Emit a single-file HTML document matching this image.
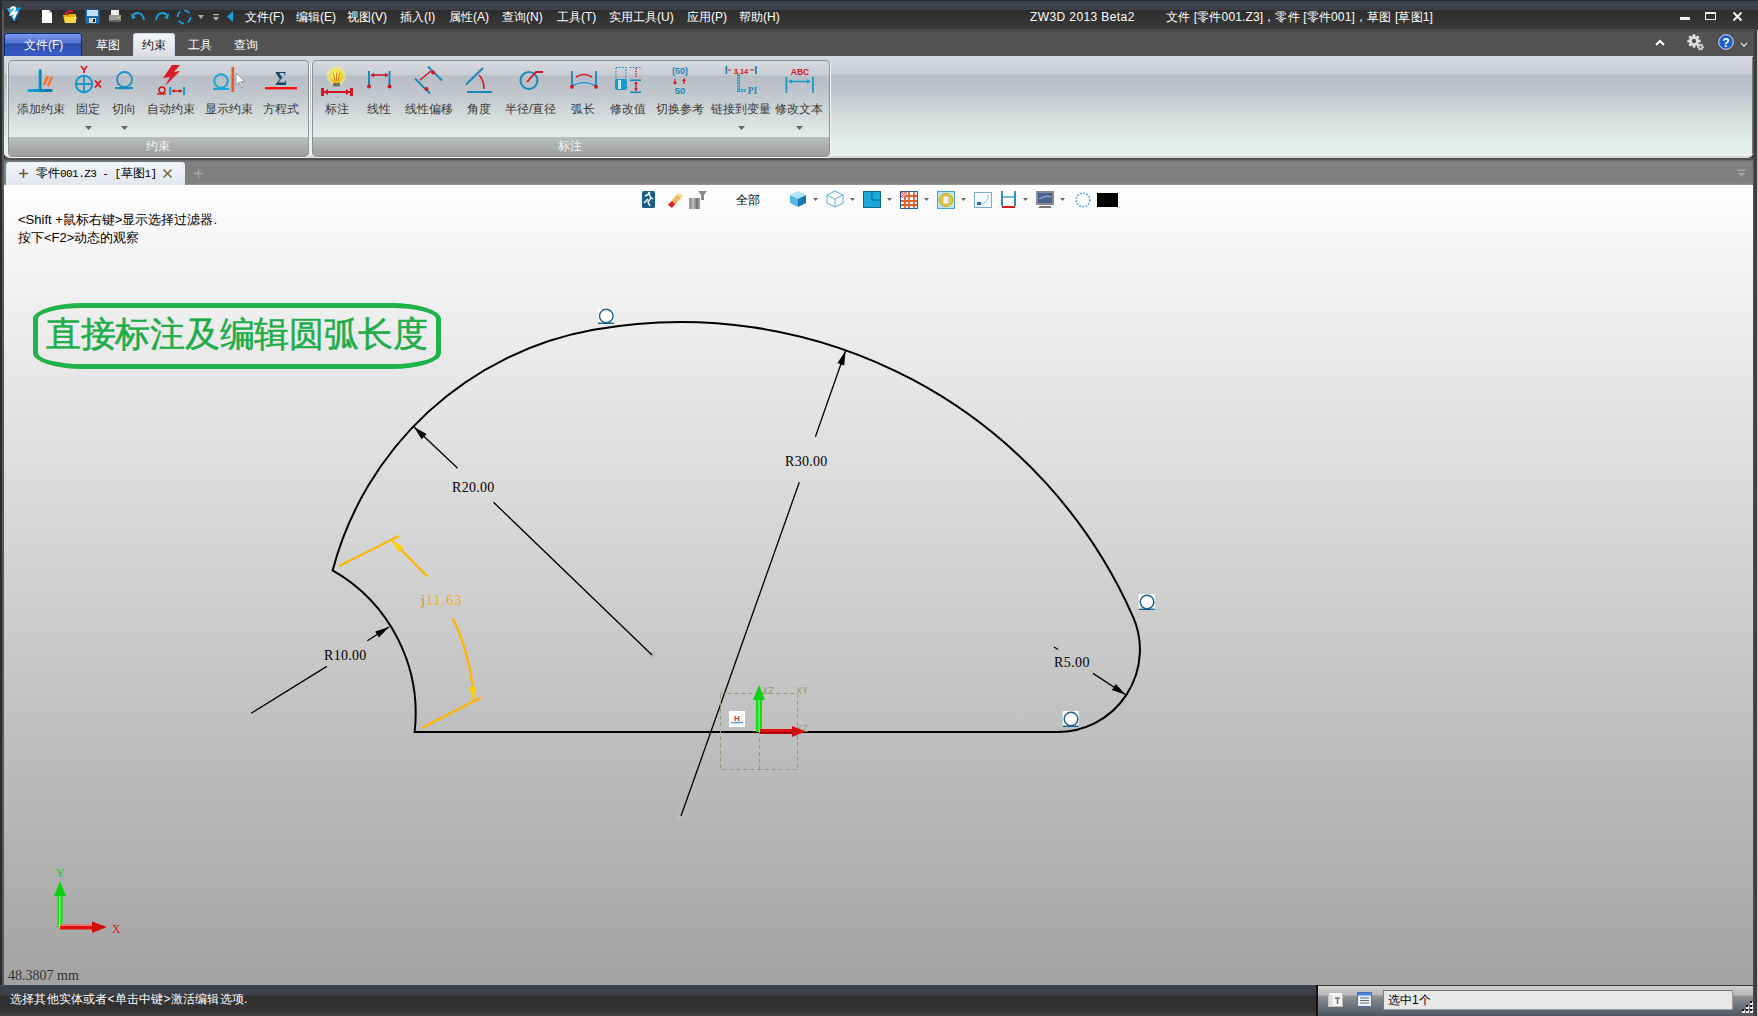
<!DOCTYPE html>
<html><head><meta charset="utf-8">
<style>
*{margin:0;padding:0;box-sizing:border-box}
html,body{width:1758px;height:1016px;overflow:hidden;background:#2e2e2e;font-family:"Liberation Sans",sans-serif;font-size:12px}
.a{position:absolute}
.t{position:absolute;white-space:nowrap;line-height:1}
.w{color:#fff}
.mono{font-family:"Liberation Mono",monospace}
svg{position:absolute;overflow:visible}
</style></head><body>
<div class="a" style="left:0;top:0;width:1758px;height:10px;background:#3d4049;border-top:1px solid #2c2c2c"></div>
<div class="a" style="left:4px;top:10px;width:1754px;height:19px;background:linear-gradient(#2d2d2d,#393939)"></div>
<div class="a" style="left:0;top:29px;width:1758px;height:3px;background:#474747"></div>
<div class="a" style="left:0;top:32px;width:1758px;height:25px;background:#525252"></div>
<div class="a" style="left:0;top:0;width:2px;height:1016px;background:#2a2a2a"></div>
<div class="a" style="left:2px;top:10px;width:2px;height:975px;background:#5a5a5a"></div>

<!-- logo -->
<svg style="left:6px;top:5px" width="17" height="18" viewBox="0 0 17 18">
<path d="M1 3 L15.5 2.5 L8.5 17 Z" fill="#1a9ad8"/><path d="M15.5 2.5 L8.5 17 L9 8 Z" fill="#0b5f98"/><path d="M1 3 L9 8 L8.5 17Z" fill="#38b8f0"/>
<path d="M5 3.5 C7.5 1 10 2.5 8.5 5 L5.5 9 L10.5 7.5 L8 12.5" stroke="#fff" stroke-width="2.2" fill="none" stroke-linecap="round"/>
<ellipse cx="8.5" cy="17" rx="4" ry="1" fill="#111" opacity="0.6"/>
</svg>
<!-- quick access icons -->
<svg style="left:41px;top:9px" width="12" height="15"><path d="M1 1 H8 L11 4 V14 H1 Z" fill="#fff"/><path d="M8 1 V4 H11" fill="#ccd" /></svg>
<svg style="left:62px;top:9px" width="16" height="15"><path d="M1 6 H6 L7 5 H14 V14 H3 Z" fill="#f5b400"/><path d="M2 8 H15 L13 14 H3 Z" fill="#ffd84a"/><path d="M4 6 C5 2 9 1 11 3" stroke="#e02020" stroke-width="2" fill="none"/><path d="M2 4 L6 7 L6 3Z" fill="#e02020"/></svg>
<svg style="left:85px;top:9px" width="15" height="15"><rect x="0.5" y="0.5" width="14" height="14" rx="1" fill="#1b6ea8"/><rect x="2" y="1" width="11" height="6" fill="#bfe0f5"/><rect x="4" y="9" width="7" height="5" fill="#ccc"/><rect x="8" y="10" width="2" height="3" fill="#123"/></svg>
<svg style="left:108px;top:9px" width="14" height="14"><rect x="3" y="1" width="8" height="5" fill="#eee"/><path d="M1 6 H13 V12 H1 Z" fill="#9a9a9a"/><rect x="2" y="11" width="10" height="2" fill="#666"/><rect x="10" y="8" width="2" height="1" fill="#ee0"/></svg>
<svg style="left:131px;top:12px" width="15" height="10"><path d="M2 3 C6 -1 12 1 13 8" stroke="#1aa0e0" stroke-width="2" fill="none"/><path d="M0 1 L5 6 L1 7Z" fill="#1aa0e0"/></svg>
<svg style="left:154px;top:12px" width="15" height="10"><path d="M13 3 C9 -1 3 1 2 8" stroke="#1aa0e0" stroke-width="2" fill="none"/><path d="M15 1 L10 6 L14 7Z" fill="#1aa0e0"/></svg>
<svg style="left:176px;top:9px" width="16" height="16"><circle cx="8" cy="8" r="6.5" stroke="#1aa0e0" stroke-width="1.6" fill="none" stroke-dasharray="6 4"/></svg>
<svg style="left:197px;top:14px" width="8" height="6"><path d="M1 1 H7 L4 5Z" fill="#aaa"/></svg>
<svg style="left:212px;top:13px" width="8" height="10"><rect x="1" y="1" width="6" height="1.2" fill="#aaa"/><path d="M1 4 H7 L4 8Z" fill="#aaa"/></svg>
<svg style="left:226px;top:10px" width="8" height="13"><path d="M7 1 V12 L1 6.5Z" fill="#1aa0e0"/></svg>
<div class="t w" style="left:245px;top:11px">文件(F)</div>
<div class="t w" style="left:296px;top:11px">编辑(E)</div>
<div class="t w" style="left:347px;top:11px">视图(V)</div>
<div class="t w" style="left:400px;top:11px">插入(I)</div>
<div class="t w" style="left:449px;top:11px">属性(A)</div>
<div class="t w" style="left:502px;top:11px">查询(N)</div>
<div class="t w" style="left:557px;top:11px">工具(T)</div>
<div class="t w" style="left:609px;top:11px">实用工具(U)</div>
<div class="t w" style="left:687px;top:11px">应用(P)</div>
<div class="t w" style="left:739px;top:11px">帮助(H)</div>
<div class="t w" style="left:1030px;top:11px;letter-spacing:0.4px">ZW3D 2013 Beta2</div>
<div class="t w" style="left:1166px;top:11px;letter-spacing:0.15px">文件 [零件001.Z3]，零件 [零件001]，草图 [草图1]</div>
<!-- window buttons -->
<div class="a" style="left:1680px;top:17px;width:10px;height:2.5px;background:#f0f0f0"></div>
<div class="a" style="left:1705px;top:12px;width:11px;height:8px;border:1.5px solid #f0f0f0;border-top-width:2.5px"></div>
<svg style="left:1732px;top:11px" width="11" height="11"><path d="M1.5 1.5 L9.5 9.5 M9.5 1.5 L1.5 9.5" stroke="#f0f0f0" stroke-width="2"/></svg>
<!-- ribbon tabs -->
<div class="a" style="left:4px;top:33px;width:78px;height:24px;border-radius:3px 3px 0 0;background:linear-gradient(#7b9bf0 0,#5070d0 9px,#2a4aa8 10px,#3a5cc8 20px,#2a48a0 24px);border:1px solid #0a2a80"></div>
<div class="t w" style="left:24px;top:39px">文件(F)</div>
<div class="t w" style="left:96px;top:39px">草图</div>
<div class="a" style="left:133px;top:33px;width:42px;height:25px;border-radius:3px 3px 0 0;background:linear-gradient(#f4f6f8,#d8dce2);border:1px solid #c9d8e0;border-bottom:none"></div>
<div class="t" style="left:142px;top:39px;color:#111">约束</div>
<div class="t w" style="left:188px;top:39px">工具</div>
<div class="t w" style="left:234px;top:39px">查询</div>
<svg style="left:1654px;top:39px" width="12" height="8"><path d="M2 6 L6 2 L10 6" stroke="#fff" stroke-width="2" fill="none"/></svg>
<svg style="left:1687px;top:34px" width="18" height="18"><path d="M11.32 5.41 L13.70 5.81 L13.70 8.19 L11.32 8.59 L11.17 8.93 L12.58 10.89 L10.89 12.58 L8.93 11.17 L8.59 11.32 L8.19 13.70 L5.81 13.70 L5.41 11.32 L5.07 11.17 L3.11 12.58 L1.42 10.89 L2.83 8.93 L2.68 8.59 L0.30 8.19 L0.30 5.81 L2.68 5.41 L2.83 5.07 L1.42 3.11 L3.11 1.42 L5.07 2.83 L5.41 2.68 L5.81 0.30 L8.19 0.30 L8.59 2.68 L8.93 2.83 L10.89 1.42 L12.58 3.11 L11.17 5.07Z" fill="#e0e0e0"/><circle cx="7" cy="7" r="2.2" fill="#525252"/><path d="M15.64 11.91 L17.00 12.16 L17.00 13.84 L15.64 14.09 L15.51 14.31 L15.98 15.61 L14.53 16.45 L13.63 15.40 L13.37 15.40 L12.47 16.45 L11.02 15.61 L11.49 14.31 L11.36 14.09 L10.00 13.84 L10.00 12.16 L11.36 11.91 L11.49 11.69 L11.02 10.39 L12.47 9.55 L13.37 10.60 L13.63 10.60 L14.53 9.55 L15.98 10.39 L15.51 11.69Z" fill="#d0d0d0"/><circle cx="13.5" cy="13" r="1" fill="#525252"/></svg>
<svg style="left:1718px;top:34px" width="16" height="16"><circle cx="8" cy="8" r="7.3" fill="#1e5fd0" stroke="#dde" stroke-width="1"/><text x="8" y="12.5" font-size="12" font-weight="bold" fill="#fff" text-anchor="middle" font-family="Liberation Sans">?</text></svg>
<svg style="left:1740px;top:42px" width="8" height="6"><path d="M1 1 L4 4 L7 1" stroke="#ddd" stroke-width="1.3" fill="none"/></svg>
<div class="a" style="left:4px;top:56px;width:1749px;height:102px;background:linear-gradient(#d6d9df 0,#c9cdd4 18px,#b7bcc6 19px,#c4c9cf 40px,#d8dddd 62px,#e5ecec 85px,#e8efef 100px);border-radius:0 0 5px 5px;border-bottom:2px solid #d4d6d6"></div>
<div class="a" style="left:1752px;top:57px;width:1px;height:97px;background:#7a7a7a"></div>
<!-- group panels -->
<div class="a" style="left:8px;top:60px;width:301px;height:97px;border:1px solid #8f9196;border-radius:4px;background:linear-gradient(#d6d9df 0,#c9cdd4 14px,#b7bcc6 15px,#c4c9cf 36px,#d8dddd 58px,#e5ecec 76px);box-shadow:1px 1px 0 #f2f6f6,-1px 0 0 #eef2f2"></div>
<div class="a" style="left:312px;top:60px;width:518px;height:97px;border:1px solid #8f9196;border-radius:4px;background:linear-gradient(#d6d9df 0,#c9cdd4 14px,#b7bcc6 15px,#c4c9cf 36px,#d8dddd 58px,#e5ecec 76px);box-shadow:1px 1px 0 #f2f6f6,-1px 0 0 #eef2f2"></div>
<div class="a" style="left:9px;top:137px;width:299px;height:19px;border-radius:0 0 3px 3px;background:linear-gradient(#bcbdbd,#9d9e9f)"></div>
<div class="a" style="left:313px;top:137px;width:516px;height:19px;border-radius:0 0 3px 3px;background:linear-gradient(#bcbdbd,#9d9e9f)"></div>
<div class="t" style="left:146px;top:140px;color:#f4f4f4">约束</div>
<div class="t" style="left:558px;top:140px;color:#f4f4f4">标注</div>
<!-- labels -->
<div class="t" style="left:17px;top:103px;color:#3a3a3a">添加约束</div>
<div class="t" style="left:76px;top:103px;color:#3a3a3a">固定</div>
<div class="t" style="left:112px;top:103px;color:#3a3a3a">切向</div>
<div class="t" style="left:147px;top:103px;color:#3a3a3a">自动约束</div>
<div class="t" style="left:205px;top:103px;color:#3a3a3a">显示约束</div>
<div class="t" style="left:263px;top:103px;color:#3a3a3a">方程式</div>
<div class="t" style="left:325px;top:103px;color:#3a3a3a">标注</div>
<div class="t" style="left:367px;top:103px;color:#3a3a3a">线性</div>
<div class="t" style="left:405px;top:103px;color:#3a3a3a">线性偏移</div>
<div class="t" style="left:467px;top:103px;color:#3a3a3a">角度</div>
<div class="t" style="left:505px;top:103px;color:#3a3a3a">半径/直径</div>
<div class="t" style="left:571px;top:103px;color:#3a3a3a">弧长</div>
<div class="t" style="left:610px;top:103px;color:#3a3a3a">修改值</div>
<div class="t" style="left:656px;top:103px;color:#3a3a3a">切换参考</div>
<div class="t" style="left:711px;top:103px;color:#3a3a3a">链接到变量</div>
<div class="t" style="left:775px;top:103px;color:#3a3a3a">修改文本</div>
<svg style="left:85px;top:126px" width="7" height="4"><path d="M0 0H7L3.5 4Z" fill="#666"/></svg>
<svg style="left:121px;top:126px" width="7" height="4"><path d="M0 0H7L3.5 4Z" fill="#666"/></svg>
<svg style="left:738px;top:126px" width="7" height="4"><path d="M0 0H7L3.5 4Z" fill="#666"/></svg>
<svg style="left:796px;top:126px" width="7" height="4"><path d="M0 0H7L3.5 4Z" fill="#666"/></svg>
<!-- icons group 1 -->
<svg style="left:0;top:0" width="900" height="100">
<defs>
<linearGradient id="bl" x1="0" y1="0" x2="1" y2="0"><stop offset="0" stop-color="#16a8d8"/><stop offset="1" stop-color="#0a6f9a"/></linearGradient>
</defs>
<!-- add constraint -->
<rect x="38.5" y="69.5" width="3" height="20" fill="url(#bl)"/>
<rect x="27.5" y="89" width="25" height="3" rx="1" fill="url(#bl)"/>
<path d="M44 85 L48 76 M48 86 L52 77" stroke="#ff6a10" stroke-width="2.2"/>
<!-- fixed -->
<circle cx="84" cy="84" r="8.2" fill="none" stroke="#1a98c8" stroke-width="2"/>
<path d="M84 76 V92 M76 84 H92" stroke="#1a98c8" stroke-width="1.8"/>
<path d="M81 66 L84 70 L87 66 M84 70 V73" stroke="#e01020" stroke-width="1.6" fill="none"/>
<path d="M95 80.5 L101 87.5 M101 80.5 L95 87.5" stroke="#e01020" stroke-width="1.8"/>
<!-- tangent -->
<circle cx="124.5" cy="79.5" r="7.5" fill="none" stroke="#1a90bc" stroke-width="1.8"/>
<rect x="115" y="87" width="18" height="2.2" fill="#1a90bc"/>
<!-- auto constraint -->
<path d="M172 65 L180 65 L174 72 L180 71 L165 86 L170 77 L163 78 Z" fill="#d81c28"/>
<circle cx="162" cy="90" r="3" fill="none" stroke="#c81818" stroke-width="1.4"/>
<rect x="157" y="93.3" width="9" height="1.4" fill="#c81818"/>
<rect x="169" y="87" width="2.2" height="8" fill="#1aa0d0"/><rect x="183" y="87" width="2.2" height="8" fill="#1aa0d0"/>
<path d="M172 91 H182" stroke="#c81818" stroke-width="1.4"/><path d="M172 91 L174.5 89 V93Z M182 91 L179.5 89 V93Z" fill="#c81818"/>
<!-- show constraint -->
<circle cx="221" cy="81" r="6.8" fill="none" stroke="#1aa8d0" stroke-width="2"/>
<rect x="213" y="88" width="16" height="2" fill="#1aa8d0"/>
<rect x="231.5" y="67" width="2.6" height="25" fill="#ea5a20"/>
<path d="M236 73 L236 85 L239 82 L241.5 87.5 L243 86.8 L240.6 81.5 L244.5 81.3 Z" fill="#fff" stroke="#8090a0" stroke-width="0.8"/>
<!-- equation -->
<text x="281" y="84.5" font-size="18" font-weight="bold" fill="#0c4a68" text-anchor="middle" font-family="Liberation Serif">Σ</text>
<rect x="265" y="87" width="32" height="2.4" fill="#ff1010"/>
<!-- group 2 -->
<!-- annotate bulb -->
<defs><radialGradient id="bulbg" cx="0.45" cy="0.4" r="0.6"><stop offset="0" stop-color="#fffbc0"/><stop offset="0.6" stop-color="#f8e030"/><stop offset="1" stop-color="#e8b800"/></radialGradient></defs>
<circle cx="336.5" cy="76" r="9.8" fill="#f4f070" opacity="0.55"/>
<path d="M330 76 A6.5 6.5 0 1 1 343 76 C343 79 340.5 80.5 340 83 H333 C332.5 80.5 330 79 330 76Z" fill="url(#bulbg)"/>
<path d="M333.5 73 L335 81 M339.5 73 L338 81 M336.5 72.5 V81" stroke="#d07010" stroke-width="0.9"/>
<rect x="333" y="83" width="7" height="3.5" rx="1" fill="#707070"/>
<rect x="321" y="88" width="3" height="8" fill="#d01820"/><rect x="350" y="88" width="3" height="8" fill="#d01820"/>
<path d="M324 92 H350" stroke="#d01820" stroke-width="2"/><path d="M324 92 L328 89 V95Z M350 92 L346 89 V95Z" fill="#d01820"/>
<!-- linear -->
<rect x="368" y="71" width="2" height="16" fill="#1a88b8"/><rect x="388.5" y="71" width="2" height="16" fill="#1a88b8"/>
<circle cx="369" cy="86.5" r="2" fill="#d01820"/><circle cx="389.5" cy="86.5" r="2" fill="#d01820"/>
<path d="M371 75 H388" stroke="#d01820" stroke-width="1.6"/><path d="M371 75 L374 72.5 V77.5Z M388 75 L385 72.5 V77.5Z" fill="#d01820"/>
<!-- linear offset -->
<path d="M415 78.5 L430 93.5 M428 66.5 L442 80.5" stroke="#1a88b8" stroke-width="2"/>
<circle cx="426.5" cy="89" r="2" fill="#d01820"/><circle cx="433" cy="72.5" r="2" fill="#d01820"/>
<path d="M420 80 L431 71" stroke="#d01820" stroke-width="1.5"/>
<!-- angle -->
<path d="M466 84.5 L483 68" stroke="#1a88b8" stroke-width="2"/>
<rect x="467" y="91" width="25" height="2" fill="#1a88b8"/>
<path d="M479 75 Q484 80 484 89" stroke="#d01820" stroke-width="1.6" fill="none"/>
<!-- radius -->
<circle cx="529" cy="80.5" r="8.5" fill="none" stroke="#1a88b8" stroke-width="2"/>
<path d="M527 82 L536 72 H543" stroke="#d01820" stroke-width="1.8" fill="none"/>
<!-- arc length -->
<rect x="571" y="71" width="1.8" height="16" fill="#1a88b8"/><rect x="595.2" y="71" width="1.8" height="16" fill="#1a88b8"/>
<path d="M572 86 Q584 79 596 86" stroke="#1aa0d0" stroke-width="1.6" fill="none"/>
<circle cx="572" cy="86.7" r="2" fill="#d01820"/><circle cx="596" cy="86.7" r="2" fill="#d01820"/>
<path d="M576 77 Q584 72 592 77" stroke="#d01820" stroke-width="1.5" fill="none"/>
<!-- modify value -->
<rect x="616" y="67.5" width="10" height="12" fill="none" stroke="#1a88b8" stroke-width="1.2" stroke-dasharray="1.5 1.5"/>
<rect x="615" y="79" width="12" height="11" rx="2" fill="#1a98c8"/><rect x="618" y="80" width="3" height="9" fill="#bfe8f8"/>
<path d="M630 67.5 H641" stroke="#1a88b8" stroke-width="1.2" stroke-dasharray="1.5 1.5"/>
<path d="M636 68 V77" stroke="#d01820" stroke-width="1.2" stroke-dasharray="1.5 1"/>
<rect x="630" y="79.5" width="11" height="1.6" fill="#1a88b8"/><rect x="630" y="91.5" width="11" height="1.6" fill="#1a88b8"/>
<path d="M636 82 V91" stroke="#d01820" stroke-width="1.3"/><path d="M636 81.5 L634 84 H638Z M636 91 L634 88.5 H638Z" fill="#d01820"/>
<!-- toggle reference -->
<text x="680" y="73.5" font-size="9" font-weight="bold" fill="#1a88b8" text-anchor="middle" font-family="Liberation Sans">(50)</text>
<path d="M675 79 V84 M684 79 V84" stroke="#d01820" stroke-width="1.3"/><path d="M673 82 H677 L675 85Z M682 81 H686 L684 78Z" fill="#d01820"/>
<text x="680" y="93.5" font-size="9.5" font-weight="bold" fill="#1a88b8" text-anchor="middle" font-family="Liberation Sans">50</text>
<!-- link to variable -->
<rect x="725.5" y="66" width="1.8" height="8" fill="#1a88b8"/><rect x="755" y="66" width="1.8" height="8" fill="#1a88b8"/>
<text x="741" y="73.5" font-size="7.5" font-weight="bold" fill="#d01820" text-anchor="middle" font-family="Liberation Sans">3,14</text>
<path d="M728 70 H731 M750 70 H754" stroke="#d01820" stroke-width="1"/>
<path d="M738.5 74 V90.5 H746" stroke="#1a98c8" stroke-width="3" fill="none" stroke-dasharray="2 0.7"/><path d="M738.5 74 V90.5 H746" stroke="#9ad8f0" stroke-width="1" fill="none" stroke-dasharray="1 1.7"/>
<text x="752.5" y="94" font-size="9.5" font-weight="bold" fill="#1a88b8" text-anchor="middle" font-family="Liberation Serif">PI</text>
<!-- modify text -->
<text x="800" y="74.5" font-size="8.5" font-weight="bold" fill="#d01820" text-anchor="middle" font-family="Liberation Sans">ABC</text>
<rect x="785.5" y="77" width="1.8" height="16" fill="#1a98c8"/><rect x="812" y="77" width="1.8" height="16" fill="#1a98c8"/>
<path d="M789 81.5 H810" stroke="#1a98c8" stroke-width="1.5"/><path d="M788 81.5 L792 79.5 V83.5Z M811 81.5 L807 79.5 V83.5Z" fill="#1a98c8"/>
</svg>
<!-- document tab bar -->
<div class="a" style="left:4px;top:158px;width:1749px;height:27px;background:linear-gradient(#5a5a5a 0,#4f4f4f 1.5px,#7a7a7a 3px,#808080 5px,#7f7f7f 25px,#9a9a9a 27px)"></div>
<div class="a" style="left:6px;top:162px;width:179px;height:23px;border-radius:3px 3px 0 0;background:linear-gradient(#f2f4f8,#e2e6ee);border-left:1px solid #c8f0f8;border-top:1px solid #dff4f8"></div>
<svg style="left:18px;top:168px" width="11" height="11"><path d="M5.5 1 V10 M1 5.5 H10" stroke="#6a5a30" stroke-width="1.6"/></svg>
<div class="t" style="left:36px;top:167px;color:#000;font-size:12px">零件<span class="mono" style="font-size:11px;letter-spacing:-0.55px">001.Z3 - [</span>草图<span class="mono" style="font-size:11px;letter-spacing:-0.55px">1]</span></div>
<svg style="left:162px;top:168px" width="11" height="11"><path d="M1.5 1.5 L9.5 9.5 M9.5 1.5 L1.5 9.5" stroke="#7a6a40" stroke-width="1.6"/></svg>
<svg style="left:193px;top:168px" width="11" height="11"><path d="M5.5 1 V10 M1 5.5 H10" stroke="#a8a8a8" stroke-width="1.4"/></svg>
<svg style="left:1737px;top:169px" width="9" height="9"><rect x="0.5" y="0.5" width="8" height="1.5" fill="#aaa3a3"/><path d="M1 4 H8 L4.5 7.5Z" fill="#aaa3a3"/></svg>
<div class="a" style="left:4px;top:184.5px;width:1749px;height:800.5px;background:linear-gradient(#fefefe 0,#f6f6f6 60px,#a3a3a3 800px)"></div>
<!-- view toolbar -->
<svg style="left:0;top:0" width="1200" height="230">
<defs>
<linearGradient id="cubeT" x1="0" y1="0" x2="0" y2="1"><stop offset="0" stop-color="#9fdcf4"/><stop offset="1" stop-color="#4bb4e0"/></linearGradient>
</defs>
<rect x="642" y="191" width="13" height="17" rx="1.5" fill="#1b5f86"/>
<path d="M645 196 L649 194 L651 198 L648 202 L650 206 M648 199 L644 203 M650 197 L653 199" stroke="#fff" stroke-width="1.4" fill="none"/><circle cx="649" cy="193" r="1.2" fill="#fff"/>
<path d="M668 205 L678 193 L683 196 L673 207 Z" fill="#e8c060"/><path d="M668 205 L672 201 L675 204 L672 208 Z" fill="#e02030"/><path d="M677 194 L682 197" stroke="#fff" stroke-width="1"/>
<rect x="689" y="198" width="11" height="11" fill="#999"/><rect x="692" y="198" width="2" height="11" fill="#bbb"/><rect x="696" y="198" width="2" height="11" fill="#777"/>
<path d="M698 191 H707 L704 195 V200 H701 V195 Z" fill="#8a8a8a"/>
<!-- cube -->
<path d="M790 195 L798 191 L806 195 L798 199 Z" fill="#aee4f8"/><path d="M790 195 L798 199 V207 L790 203 Z" fill="#52b8e4"/><path d="M806 195 L798 199 V207 L806 203 Z" fill="#1a78b0"/>
<path d="M813 198 H818 L815.5 201Z" fill="#666"/>
<path d="M827 195 L835 191 L843 195 L835 199 Z M827 195 V203 L835 207 V199 M843 195 V203 L835 207" fill="#fff" stroke="#5aaed8" stroke-width="1"/>
<path d="M850 198 H855 L852.5 201Z" fill="#666"/>
<rect x="863.5" y="191.5" width="17" height="16" fill="#1aa8d8" stroke="#0a6890" stroke-width="1"/><path d="M872 192 V200 H880" stroke="#0a6890" stroke-width="1" fill="none"/>
<path d="M887 198 H892 L889.5 201Z" fill="#666"/>
<rect x="900.5" y="191.5" width="17" height="17" fill="#fff" stroke="#2a60a0" stroke-width="1"/>
<path d="M901 196 H917 M901 201 H917 M901 205 H917 M905 192 V208 M909 192 V208 M914 192 V208" stroke="#e06030" stroke-width="1.8"/>
<rect x="901" y="192" width="5" height="5" fill="#fff" stroke="#c03040" stroke-width="0.8"/><path d="M901.5 192.5 L905.5 196.5 M905.5 192.5 L901.5 196.5" stroke="#d02030" stroke-width="0.8"/>
<path d="M924 198 H929 L926.5 201Z" fill="#666"/>
<rect x="937.5" y="191.5" width="17" height="17" fill="#bde4f4" stroke="#4aa0d0" stroke-width="1"/><circle cx="946" cy="200" r="6.5" fill="#f4d020" stroke="#c8a010" stroke-width="1"/><rect x="943" y="196" width="6" height="8" fill="#eee" stroke="#999" stroke-width="0.6"/>
<path d="M961 198 H966 L963.5 201Z" fill="#666"/>
<rect x="974.5" y="192.5" width="17" height="15" fill="#f4f8fc" stroke="#7aaccc" stroke-width="1"/><path d="M978 203 A7 7 0 0 0 988 195" stroke="#8ac8e8" stroke-width="1" fill="none"/><rect x="977" y="202" width="4" height="3" fill="#1a70b0"/>
<rect x="1001" y="191" width="2" height="15" fill="#2a90c0"/><rect x="1014" y="191" width="2" height="15" fill="#2a90c0"/><path d="M1003 197 H1014" stroke="#2a90c0" stroke-width="1.3"/><rect x="1002" y="206" width="13" height="2" fill="#d02020"/>
<path d="M1023 198 H1028 L1025.5 201Z" fill="#666"/>
<rect x="1036" y="191" width="18" height="14" fill="#8a8a90"/><rect x="1038" y="193" width="14" height="10" fill="#4a6090"/><path d="M1039 199 Q1045 195 1051 197" stroke="#8aa0c8" stroke-width="1.5" fill="none"/><path d="M1040 206 H1050 L1052 208 H1038Z" fill="#777"/>
<path d="M1060 198 H1065 L1062.5 201Z" fill="#666"/>
<circle cx="1083" cy="200" r="6.8" fill="none" stroke="#4aa0d8" stroke-width="1.6" stroke-dasharray="1.6 1.6"/>
<rect x="1097" y="193" width="21" height="14" fill="#000"/>
</svg>
<div class="t" style="left:736px;top:194px;font-size:12px;color:#000">全部</div>
<div class="t" style="left:18px;top:213px;font-size:13px;color:#000">&lt;Shift +鼠标右键&gt;显示选择过滤器.</div>
<div class="t" style="left:18px;top:231px;font-size:13px;color:#000">按下&lt;F2&gt;动态的观察</div>
<!-- green label -->
<div class="a" style="left:33px;top:303px;width:408px;height:66px;border:5px solid #22b24c;border-radius:50px/16px"></div>
<div class="t" style="left:46px;top:317px;-webkit-text-stroke:0.5px #20ac48;font-family:'Liberation Serif',serif;font-size:35px;font-weight:500;color:#20ac48;letter-spacing:-0.3px">直接标注及编辑圆弧长度</div>
<svg width="1758" height="1016" style="left:0;top:0">
<rect x="649" y="652" width="6" height="6" fill="#bcbcbc"/>
<rect x="678" y="813" width="7" height="6" fill="#bdbdbd"/>
<rect x="1055" y="646" width="6" height="6" fill="#c8c8c8"/>
<path d="M414.6 732.0 A164.5 164.5 0 0 0 332.6 570.4 A330.40904670489874 330.40904670489874 0 0 1 593.4 329.8 L593.4 329.8 A494 494 0 0 1 1132.8 616.3 L1132.9 616.3 A82.4 82.4 0 0 1 1057.5 732.0 Z" fill="none" stroke="#000" stroke-width="2"/>
<line x1="652.0" y1="655.0" x2="493.5" y2="502.3" stroke="#000" stroke-width="1.3"/>
<line x1="457.7" y1="468.2" x2="414.0" y2="427.0" stroke="#000" stroke-width="1.3"/>
<polygon points="414.0,427.0 421.6,439.3 426.6,434.1" fill="#000"/>
<line x1="681.0" y1="816.0" x2="799.3" y2="482.2" stroke="#000" stroke-width="1.3"/>
<line x1="815.4" y1="436.8" x2="845.5" y2="351.0" stroke="#000" stroke-width="1.3"/>
<polygon points="845.5,351.0 837.4,363.0 844.2,365.4" fill="#000"/>
<line x1="251.2" y1="713.3" x2="326.8" y2="666.4" stroke="#000" stroke-width="1.3"/>
<line x1="367.3" y1="640.7" x2="389.0" y2="627.0" stroke="#000" stroke-width="1.3"/>
<polygon points="389.0,627.0 375.2,631.4 379.0,637.5" fill="#000"/>
<line x1="1054.0" y1="647.0" x2="1058.0" y2="649.5" stroke="#000" stroke-width="1.3"/>
<line x1="1093.0" y1="673.4" x2="1125.6" y2="694.8" stroke="#000" stroke-width="1.3"/>
<polygon points="1125.6,694.8 1115.9,684.0 1111.9,690.0" fill="#000"/>
<line x1="339.0" y1="566.0" x2="399.0" y2="536.0" stroke="#ffb400" stroke-width="2.3"/>
<line x1="421.8" y1="728.0" x2="480.9" y2="697.8" stroke="#ffb400" stroke-width="2.3"/>
<path d="M391.8 540.2 L427.3 576.5 M452.9 618.2 A223 223 0 0 1 473.8 699.7" fill="none" stroke="#ffb400" stroke-width="2.3"/>
<polygon points="391.8,540.2 398.4,552.0 403.4,547.1" fill="#ffd200"/>
<polygon points="473.8,699.7 475.8,686.4 468.9,687.2" fill="#ffd200"/>
</svg>
<!-- dimension texts -->
<div class="t" style="left:452px;top:481px;font-family:'Liberation Serif',serif;font-size:14px;color:#000;letter-spacing:0.3px">R20.00</div>
<div class="t" style="left:785px;top:455px;font-family:'Liberation Serif',serif;font-size:14px;color:#000;letter-spacing:0.3px">R30.00</div>
<div class="t" style="left:324px;top:649px;font-family:'Liberation Serif',serif;font-size:14px;color:#000;letter-spacing:0.3px">R10.00</div>
<div class="t" style="left:1054px;top:656px;font-family:'Liberation Serif',serif;font-size:14px;color:#000;letter-spacing:0.4px">R5.00</div>
<div class="t" style="left:421px;top:594px;font-family:'Liberation Serif',serif;font-size:14px;color:#f5b000;letter-spacing:1.1px"><span style="color:#b89030">j</span>11.63</div>
<!-- tangent markers -->
<svg style="left:0;top:0" width="1200" height="800">

<g transform="translate(606.3 316)"><rect x="-8.3" y="-8" width="16" height="16" fill="#fff"/><circle cx="0" cy="0" r="6.8" fill="#fff" stroke="#1a5f88" stroke-width="1.4"/><rect x="-8.3" y="6.6" width="16" height="1.4" fill="#1a5f88"/></g>
<g transform="translate(1147 602)"><rect x="-8.3" y="-8" width="16" height="16" fill="#fff"/><circle cx="0" cy="0" r="6.8" fill="#fff" stroke="#1a5f88" stroke-width="1.4"/><rect x="-8.3" y="6.6" width="16" height="1.4" fill="#1a5f88"/></g>
<g transform="translate(1071 719)"><rect x="-8.3" y="-8" width="16" height="16" fill="#fff"/><circle cx="0" cy="0" r="6.8" fill="#fff" stroke="#1a5f88" stroke-width="1.4"/><rect x="-8.3" y="6.6" width="16" height="1.4" fill="#1a5f88"/></g>
</svg>
<!-- UCS -->
<svg style="left:0;top:0" width="1200" height="1016">
<path d="M720.5 693.5 H797.5 V769.5 H720.5 Z M759.5 731 V769" fill="none" stroke="#8a9e7a" stroke-width="1" stroke-dasharray="4 3"/>
<text x="762" y="694" font-size="10" fill="#8aa27a" font-family="Liberation Mono">XZ</text>
<text x="796" y="694" font-size="10" fill="#8aa27a" font-family="Liberation Mono">XY</text>
<text x="796" y="732" font-size="10" fill="#8aa27a" font-family="Liberation Mono">YZ</text>
<rect x="756" y="697" width="6" height="35" fill="#10e010"/><rect x="758.5" y="697" width="1" height="35" fill="#c0ffc0" opacity="0.8"/>
<path d="M759 685 L765 700 H753 Z" fill="#10d010"/>
<rect x="760" y="729" width="33" height="5" fill="#e01010"/><rect x="760" y="732" width="33" height="1.5" fill="#900"/>
<path d="M806 731.5 L792 726 V737 Z" fill="#d01010"/>
<rect x="729" y="711" width="16" height="16" fill="#fff"/>
<text x="737" y="720.5" font-size="8" font-weight="bold" fill="#c83030" text-anchor="middle" font-family="Liberation Sans">H</text>
<rect x="731" y="721.8" width="12" height="1.5" fill="#5aa0c8"/>
<!-- bottom-left triad -->
<rect x="57.5" y="893" width="5" height="35" fill="#10e010"/><rect x="59" y="893" width="1.3" height="35" fill="#b0ffb0"/>
<path d="M60 881 L66 896 H54 Z" fill="#10d010"/>
<rect x="60" y="924.5" width="33" height="5" fill="#e01010"/><rect x="60" y="924.5" width="33" height="1.3" fill="#ff9090"/>
<path d="M107 927 L92 921.5 V933 Z" fill="#d01010"/>
<text x="56" y="877" font-size="12" fill="#10d010" font-family="Liberation Serif">Y</text>
<text x="112" y="933" font-size="12" fill="#e01010" font-family="Liberation Serif">X</text>
</svg>
<div class="t" style="left:8px;top:969px;font-family:'Liberation Serif',serif;font-size:14px;color:#333;letter-spacing:0px">48.3807 mm</div>
<div class="a" style="left:0;top:985px;width:1316px;height:31px;background:linear-gradient(#3d414a 0,#3d414a 10px,#303030 11px,#333 26px,#454545 31px)"></div>
<div class="t w" style="left:10px;top:993px;font-size:12px;letter-spacing:0.2px">选择其他实体或者&lt;单击中键&gt;激活编辑选项.</div>
<div class="a" style="left:1316px;top:985px;width:2px;height:31px;background:#111"></div>
<div class="a" style="left:1318px;top:985px;width:435px;height:31px;background:linear-gradient(#3a3a3a 0,#3a3a3a 1px,#d0d0d0 1px,#b8b8b8 10px,#8e9294 11px,#6a7078 22px,#4e5560 31px)"></div><div class="a" style="left:1753px;top:30px;width:4px;height:986px;background:linear-gradient(90deg,#555 0,#3a3a3a 2px,#444 4px)"></div><div class="a" style="left:1757px;top:30px;width:1px;height:986px;background:#c8c8c8"></div>
<svg style="left:1328px;top:992px" width="16" height="16"><rect x="0.5" y="0.5" width="14" height="14" fill="#f4f4f4" stroke="#bbb"/><rect x="0.5" y="3" width="4" height="11.5" fill="#ddd"/><path d="M7 6 H12 M9.5 6 V12" stroke="#777" stroke-width="1.6"/></svg>
<svg style="left:1357px;top:992px" width="16" height="16"><rect x="0.5" y="0.5" width="14" height="14" fill="#eef2ff" stroke="#4a70c0"/><rect x="1" y="1" width="13" height="2.5" fill="#4a80e0"/><path d="M3 6 H12 M3 8.5 H12 M3 11 H12" stroke="#555" stroke-width="0.9"/></svg>
<div class="a" style="left:1383px;top:990px;width:350px;height:20px;background:#e8e8e8;border:1px solid #7a7a7a;border-right-color:#999;border-bottom-color:#999"></div>
<div class="t" style="left:1388px;top:994px;font-size:12px;color:#000">选中1个</div>
<svg style="left:1741px;top:1000px" width="14" height="14"><path d="M9 2h3v3h-3z M5 6h3v3h-3z M9 6h3v3h-3z M1 10h3v3h-3z M5 10h3v3h-3z M9 10h3v3h-3z" fill="#eee"/><path d="M9 1h2v2h-2z M5 5h2v2h-2z M9 5h2v2h-2z M1 9h2v2h-2z M5 9h2v2h-2z M9 9h2v2h-2z" fill="#111"/></svg>
</body></html>
